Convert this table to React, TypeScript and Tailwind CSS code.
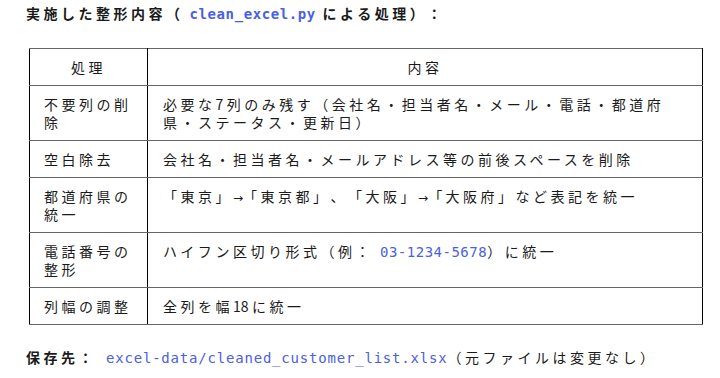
const Arrow = () => (
  <span className="font-['DejaVu_Sans',sans-serif] text-[12px] tracking-normal">→</span>
);

const rows: { name: string; body: React.ReactNode }[] = [
  {
    name: "不要列の削除",
    body: "必要な7列のみ残す（会社名・担当者名・メール・電話・都道府県・ステータス・更新日）",
  },
  { name: "空白除去", body: "会社名・担当者名・メールアドレス等の前後スペースを削除" },
  {
    name: "都道府県の統一",
    body: (
      <>
        「東京」<Arrow />「東京都」、「大阪」<Arrow />「大阪府」など表記を統一
      </>
    ),
  },
  {
    name: "電話番号の整形",
    body: (
      <>
        ハイフン区切り形式（例：<Code className="ml-[7px] tracking-[0.5px]">03-1234-5678</Code>）に統一
      </>
    ),
  },
  {
    name: "列幅の調整",
    body: (
      <>
        全列を幅<span className="tracking-normal">1</span>8に統一
      </>
    ),
  },
];

function Code({ children, className }: { children: React.ReactNode; className?: string }) {
  return (
    <span className={`font-['DejaVu_Sans_Mono',monospace] text-[#4a60e4] ${className ?? ""}`}>
      {children}
    </span>
  );
}

export default function App() {
  return (
    <div className="w-[720px] h-[378px] bg-white pl-[26px] pt-[4px] text-[14px] leading-[18px] tracking-[0.25em] [text-spacing-trim:space-all] text-[#1a1a1a] font-['Noto_Sans_CJK_JP','Noto_Sans',sans-serif]">
      <p className="font-bold h-[20px]">
        実施した整形内容（<Code className="font-bold ml-[6px] tracking-[0.6px]">clean_excel.py</Code> による処理）：
      </p>

      <table className="mt-[24px] ml-[3px] w-[674px] border-collapse table-fixed">
        <colgroup>
          <col className="w-[118px]" />
          <col />
        </colgroup>
        <thead>
          <tr>
            <th className="font-normal text-center py-[9px] border border-black border-y-[#666]">
              処理
            </th>
            <th className="font-normal text-center py-[9px] border border-black border-y-[#666]">
              内容
            </th>
          </tr>
        </thead>
        <tbody>
          {rows.map((r) => (
            <tr key={r.name}>
              <td className="align-top pl-[14px] pr-[12px] py-[9px] border border-black border-y-[#666]">
                {r.name}
              </td>
              <td className="align-top pl-[15px] pr-[20px] py-[9px] border border-black border-y-[#666]">
                {r.body}
              </td>
            </tr>
          ))}
        </tbody>
      </table>

      <p className="mt-[23px]">
        <span className="font-bold">保存先：</span>
        <Code className="ml-[10px] tracking-[0.8px]">excel-data/cleaned_customer_list.xlsx</Code>（元ファイルは変更なし）
      </p>
    </div>
  );
}
